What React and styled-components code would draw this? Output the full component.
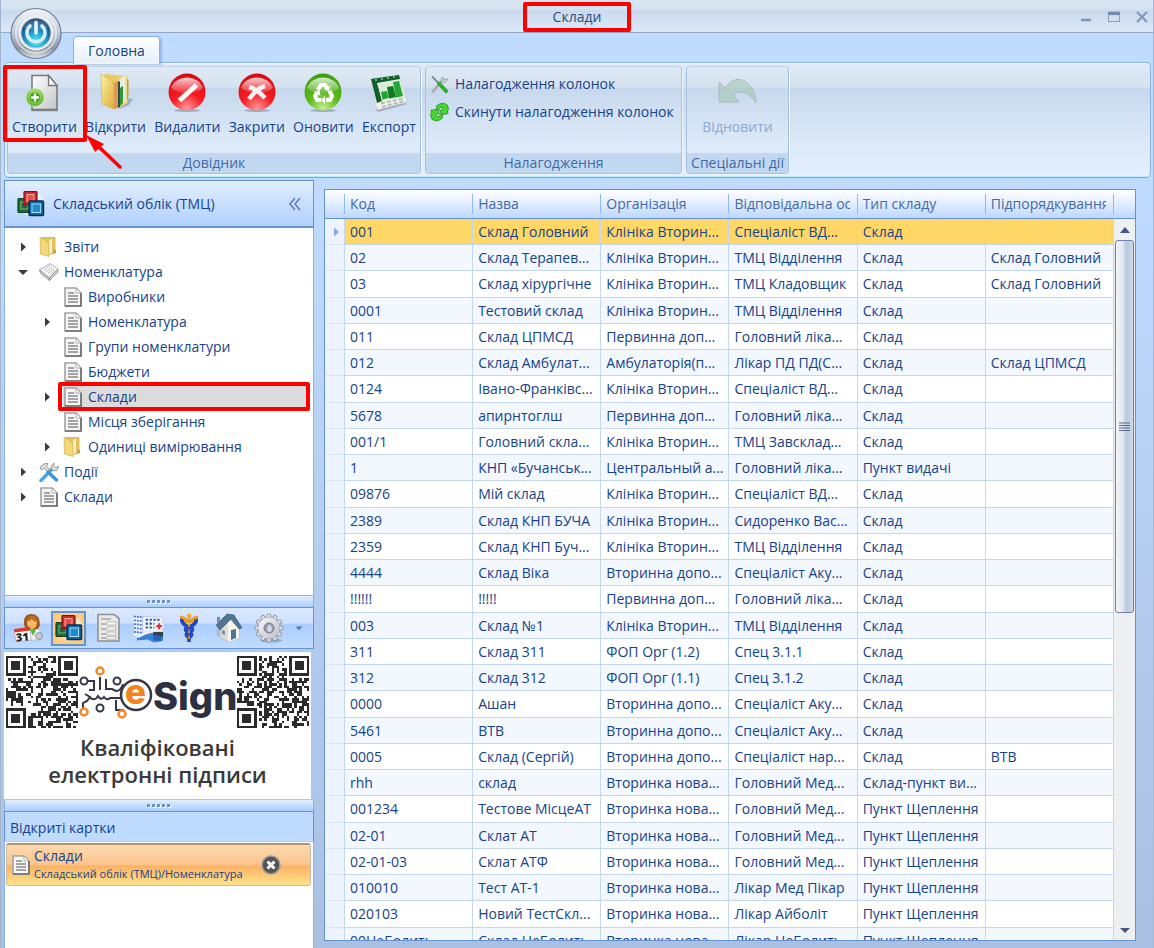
import React, { useState } from 'react';
import styled, { createGlobalStyle, css } from 'styled-components';

const GlobalStyle = createGlobalStyle`
  * {
    box-sizing: border-box;
  }

  body {
    margin: 0;
    font-family: "Open Sans", "Noto Sans", sans-serif;
    font-size: 14px;
    line-height: 20px;
    color: #15428b;
  }

  button {
    margin: 0;
    padding: 0;
    border: none;
    background: none;
    font: inherit;
    color: inherit;
    cursor: pointer;
  }

  svg {
    display: block;
    flex-shrink: 0;
  }
`;

// ---------- window ----------

const Window = styled.div`
  position: relative;
  display: flex;
  flex-direction: column;
  height: 100vh;
  overflow: hidden;
  border-left: 1px solid #a3b4cc;
  border-right: 1px solid #a3b8d6;
  background: linear-gradient(#bfdbff 0, #bfdbff 180px, #a9c0e2 100%);
`;

const TitleBar = styled.header`
  display: flex;
  align-items: center;
  height: 33px;
  padding-top: 1px;
  border-bottom: 1px solid #94a6c4;
  background: linear-gradient(#dae7f3 0, #d5e2ef 9px, #c9d9ed 11px, #dde9f8 32px);
`;

const TitleText = styled.h1`
  position: relative;
  margin: 0 auto;
  padding: 0 30px;
  font-size: 14px;
  font-weight: 400;
  color: #2f4b7c;
`;

const WindowControls = styled.div`
  display: flex;
  gap: 16px;
  margin-right: 5px;
`;

const TitleSide = styled.div`
  flex: 1;
  display: flex;
  justify-content: flex-end;
`;

const Orb = styled.button`
  position: absolute;
  top: 7px;
  left: 9px;
  z-index: 3;
`;

// red marker drawn around a highlighted control
const Frame = styled.span`
  position: absolute;
  inset: ${props => props.$inset};
  z-index: 2;
  border: 4px solid #ff0000;
  border-radius: 2px;
  pointer-events: none;
`;

const PointerArrow = styled.svg`
  position: absolute;
  top: 66px;
  left: 76px;
  z-index: 2;
`;

// ---------- ribbon ----------

const TabStrip = styled.nav`
  display: flex;
  align-items: flex-end;
  height: 30px;
  padding-left: 72px;
`;

const Tab = styled.button`
  position: relative;
  z-index: 1;
  height: 28px;
  margin-bottom: -1px;
  padding: 0 14px;
  border: 1px solid #8db2e3;
  border-bottom: none;
  border-radius: 4px 4px 0 0;
  background: linear-gradient(#ffffff, #e6eff9);
  box-shadow: inset 0 0 0 1px #f2f8ff, 2px 1px 2px rgba(90, 130, 190, 0.4);
`;

const Ribbon = styled.div`
  display: flex;
  gap: 4px;
  height: 116px;
  margin: -1px 2px 0 3px;
  padding: 3px 2px;
  border: 1px solid #8db2e3;
  border-bottom-color: #7ea6d6;
  border-radius: 5px;
  background: linear-gradient(#e0ebf6 0, #d5e2ef 24px, #c7d8ed 25px, #d5e4f4 60px, #e5f0fd 112px);
  box-shadow: inset 0 -1px 0 #b5ecf8, inset 0 1px 0 #f2f8fe;
`;

const Group = styled.section`
  display: flex;
  flex-direction: column;
  width: ${props => props.$width};
  border: 1px solid #a6c2e0;
  border-top-color: #c3d3e4;
  border-radius: 4px;
  overflow: ${props => (props.$marked ? 'visible' : 'hidden')};
  box-shadow: 1px 1px 0 #eef6fe;
`;

const GroupBody = styled.div`
  flex: 1;
  display: flex;
  justify-content: ${props => props.$align || 'space-between'};
  align-items: flex-start;
`;

const GroupList = styled.div`
  flex: 1;
  display: flex;
  flex-direction: column;
  align-items: flex-start;
  gap: 4px;
  padding: 5px 4px;
`;

const GroupTitle = styled.h2`
  margin: 0;
  height: 20px;
  border-radius: 0 0 3px 3px;
  background: #c1d8f0;
  font-size: 14px;
  font-weight: 400;
  text-align: center;
  white-space: nowrap;
  color: #3e6aaa;
`;

const RibbonButton = styled.button`
  position: relative;
  display: flex;
  flex-direction: column;
  align-items: center;
  gap: 4px;
  padding: 6px 4px 3px;

  &:disabled {
    color: #8fa9cf;
    cursor: default;
  }

  &:disabled svg {
    opacity: 0.55;
  }
`;

const SmallButton = styled.button`
  display: flex;
  align-items: center;
  gap: 6px;
  height: 24px;
  white-space: nowrap;
`;

// ---------- layout ----------

const Workspace = styled.div`
  flex: 1;
  display: flex;
  gap: 10px;
  min-height: 0;
  padding: 2px 17px 0 3px;
`;

const Sidebar = styled.aside`
  display: flex;
  flex-direction: column;
  width: 310px;
  flex-shrink: 0;
`;

const NavHeader = styled.div`
  display: flex;
  align-items: center;
  gap: 8px;
  height: 48px;
  padding: 0 10px 0 12px;
  border: 1px solid #6593cf;
  border-bottom-width: 2px;
  background: linear-gradient(#e3efff, #c9dfff 50%, #b0d1ff);
`;

const NavTitle = styled.h2`
  flex: 1;
  margin: 0;
  font-size: 14px;
  font-weight: 400;
`;

const Tree = styled.ul`
  flex: 1;
  margin: 0;
  padding: 6px 5px 0 10px;
  list-style: none;
  border: 1px solid #8db2e3;
  border-top: none;
  background: #ffffff;
`;

const TreeRow = styled.li`
  display: flex;
  align-items: center;
  gap: 8px;
  height: 25px;
  padding-left: ${props => props.$level * 24}px;
`;

const Expander = styled.span`
  display: flex;
  justify-content: center;
  width: 16px;
`;

const TreeItem = styled.button`
  position: relative;
  flex: 1;
  display: flex;
  align-items: center;
  gap: 5px;
  height: 25px;
  background: ${props => (props.$selected ? '#dcdcdc' : 'none')};
`;

const Splitter = styled.div`
  display: flex;
  justify-content: center;
  align-items: center;
  height: 11px;
  border-left: 1px solid #8db2e3;
  border-right: 1px solid #8db2e3;
  background: linear-gradient(#e3efff, #a9ccfa);
`;

const IconBar = styled.div`
  display: flex;
  align-items: center;
  gap: 5px;
  height: 42px;
  padding-left: 6px;
  border: 1px solid #6593cf;
  background: linear-gradient(#dbe9ff 0, #cfe1ff 38%, #abcdff 40%, #c3dcff 100%);
`;

const IconButton = styled.button`
  display: flex;
  align-items: center;
  justify-content: center;
  width: 35px;
  height: 35px;
  border: 2px solid transparent;

  ${props => props.$active && css`
    border-color: #6593cf;
    background: radial-gradient(#ffe3b8 0, #ffcf8b 45%, #ffc872 100%);
  `}
`;

const MoreButton = styled.button`
  padding: 4px;
`;

const Banner = styled.section`
  height: 147px;
  margin: 3px 3px 1px 0;
  padding-top: 4px;
  background: #ffffff;
`;

const BannerTop = styled.div`
  display: flex;
  justify-content: space-between;
  padding: 0 2px;
`;

const BannerText = styled.p`
  margin: 6px 0 0;
  font-size: 22px;
  font-weight: 600;
  line-height: 27px;
  text-align: center;
  color: #3a3a3a;
`;

const CardsHeader = styled.h2`
  margin: 0;
  padding: 6px 5px 2px;
  height: 31px;
  border: 1px solid #6593cf;
  border-bottom-color: #c0c8d2;
  background: #bfdbff;
  font-size: 14px;
  font-weight: 400;
`;

const Cards = styled.div`
  height: 106px;
  padding: 1px 2px 0 1px;
  border-left: 1px solid #8db2e3;
  border-right: 1px solid #8db2e3;
  background: #ffffff;
`;

const Card = styled.div`
  display: flex;
  align-items: center;
  height: 43px;
  padding: 0 29px 0 4px;
  border: 1px solid #c9bca4;
  border-top: 2px solid #b0936f;
  border-radius: 3px;
  background: linear-gradient(#fcd9b0 0, #fbc58b 50%, #fbb163 52%, #ffe38b 100%);
`;

const CardText = styled.div`
  flex: 1;
  margin-left: 3px;
`;

const CardName = styled.div`
  line-height: 18px;
`;

const CardPath = styled.div`
  font-size: 11px;
  line-height: 18px;
`;

// ---------- grid ----------

const GridPanel = styled.main`
  flex: 1;
  display: flex;
  min-width: 0;
  margin: 9px 0 7px;
  border: 1px solid #6593cf;
  background: #ffffff;
  overflow: hidden;
`;

const TableBox = styled.div`
  flex: 1;
  min-width: 0;
  overflow: hidden;
`;

const Table = styled.table`
  width: 100%;
  table-layout: fixed;
  border-collapse: separate;
  border-spacing: 0;
`;

const headFill = css`
  height: 29px;
  border-bottom: 1px solid #6593cf;
  background: linear-gradient(#ffffff, #e1edff 50%, #bcd7ff);
`;

const HeadCell = styled.th`
  ${headFill}
  width: ${props => (props.$marker ? '19px' : 'auto')};
  padding: 0;
  font-weight: 400;
  text-align: left;
`;

const HeadLabel = styled.span`
  display: block;
  margin-right: 7px;
  padding-left: 5px;
  border-left: 1px solid #8fbbf0;
  overflow: hidden;
  white-space: nowrap;
  color: #4469a5;
`;

const Row = styled.tr`
  height: 26px;
  background: ${props => (props.$selected ? '#ffd766' : '#ffffff')};

  /* rows are a little over 26px high, so every fourth one takes the spare pixel */
  &:nth-child(4n + 3) {
    height: 27px;
  }

  &:nth-child(even) {
    background: #f3f8ff;
  }
`;

const Cell = styled.td`
  padding: 0 0 0 5px;
  border-left: 1px solid #c4d7f0;
  border-bottom: 1px solid #c4d7f0;
  overflow: hidden;
  white-space: nowrap;
`;

const MarkerCell = styled.td`
  padding: 0 0 0 5px;
  border-bottom: 1px solid #d9e5f5;
  background: #edf4ff;
`;

const ScrollBar = styled.div`
  display: flex;
  flex-direction: column;
  width: 22px;
  background: #eeeff1;
`;

const ScrollHead = styled.div`
  ${headFill}
  flex-shrink: 0;
  padding-top: 4px;

  &::before {
    content: '';
    display: block;
    height: 20px;
    border-left: 1px solid #8fbbf0;
  }
`;

const ScrollTrack = styled.div`
  flex: 1;
  padding: 0 1px;
  border-left: 1px solid #c4d7f0;
`;

const ScrollButton = styled.button`
  display: flex;
  align-items: center;
  justify-content: center;
  height: 21px;
  border-left: 1px solid #c4d7f0;
`;

const ScrollThumb = styled.div`
  display: flex;
  align-items: center;
  justify-content: center;
  height: 55%;
  border: 1px solid #6f7fa8;
  border-radius: 3px;
  background: linear-gradient(90deg, #f2f4f8 0, #e3e8ef 40%, #b9c8dc 60%, #cfd9e6 100%);
`;

// ---------- icons ----------

const OrbIcon = () => (
  <svg width="53" height="53" viewBox="0 0 53 53">
    <defs>
      <linearGradient id="orbRim" x1="0" y1="0" x2="0" y2="1">
        <stop offset="0" stopColor="#f4f6f9" />
        <stop offset="0.45" stopColor="#c6cedb" />
        <stop offset="0.8" stopColor="#8d94a0" />
        <stop offset="1" stopColor="#e4e6ea" />
      </linearGradient>
      <radialGradient id="orbCore" cx="0.5" cy="0.8" r="0.75">
        <stop offset="0" stopColor="#4ff3fb" />
        <stop offset="0.5" stopColor="#1c93c6" />
        <stop offset="1" stopColor="#123f70" />
      </radialGradient>
    </defs>
    <circle cx="26" cy="26.500" r="25" fill="url(#orbRim)" stroke="#6f7d95" strokeWidth="1.200" />
    <circle cx="26" cy="26" r="20" fill="none" stroke="#e9edf3" strokeOpacity="0.7" strokeWidth="2" />
    <circle cx="26" cy="26" r="16.500" fill="#c9ced8" stroke="#eef1f5" strokeWidth="2" />
    <circle cx="26" cy="26" r="14.500" fill="url(#orbCore)" />
    <path d="M20 19a9 9 0 1 0 12 0" fill="none" stroke="#d5ecf7" strokeWidth="3.600" strokeLinecap="round" />
    <path d="M26 15.500v10.500" stroke="#e6f5fb" strokeWidth="3.600" strokeLinecap="round" />
    <path d="M13 20a14.500 14.500 0 0 1 26 0q-13 5-26 0z" fill="#ffffff" fillOpacity="0.15" />
  </svg>
);

const CreateIcon = () => (
  <svg width="40" height="40" viewBox="2 0 40 40">
    <defs>
      <linearGradient id="pageFill" x1="0" y1="0" x2="1" y2="1">
        <stop offset="0" stopColor="#ffffff" />
        <stop offset="1" stopColor="#c4c4c4" />
      </linearGradient>
      <radialGradient id="plusFill" cx="0.5" cy="0.3" r="0.7">
        <stop offset="0" stopColor="#b7ec7e" />
        <stop offset="1" stopColor="#58b01f" />
      </radialGradient>
    </defs>
    <path d="M9.500 37.500h26.500" stroke="#555555" strokeWidth="1.500" strokeOpacity="0.6" />
    <path d="M10 2.500h16.500l8.500 10V36.500H10z" fill="url(#pageFill)" stroke="#777777" strokeWidth="1.500" />
    <path d="M26.500 2.500v10H35z" fill="#f5f5f5" stroke="#777777" strokeWidth="1.300" />
    <circle cx="13" cy="24.500" r="9" fill="url(#plusFill)" stroke="#c5eaa8" strokeWidth="0.800" />
    <circle cx="13" cy="24.500" r="5.500" fill="#3f9e1c" stroke="#8fd460" strokeWidth="1" />
    <path d="M13 20.500v8M9 24.500h8" stroke="#ffffff" strokeWidth="2.400" />
  </svg>
);

const OpenIcon = () => (
  <svg width="40" height="40" viewBox="-3 -1 40 40">
    <defs>
      <linearGradient id="folderFill" x1="0" y1="0" x2="1" y2="1">
        <stop offset="0" stopColor="#fdf2a5" />
        <stop offset="1" stopColor="#dfae38" />
      </linearGradient>
    </defs>
    <path d="M20 35l10-4 4-6-6-1z" fill="#7f93ad" fillOpacity="0.6" />
    <path d="M5 0l23 2v27l-8 5z" fill="#eacb62" />
    <path d="M23 2l6-1v27l-5 3z" fill="#f3df86" />
    <path d="M20 5l6-3v24l-4 5z" fill="#e5efe2" />
    <path d="M15 9l4-2v27l-4 1z" fill="#e0965a" />
    <path d="M19 8l2-1v26l-2 1z" fill="#3b4a44" />
    <path d="M21 14l3-2v17l-3 3z" fill="#2c9a38" />
    <path d="M2 0l10 6 3 4v25l-12-5z" fill="url(#folderFill)" stroke="#d4a93a" strokeWidth="0.600" />
    <path d="M28 5h1.500v16l-1.500 8z" fill="#c79b30" />
  </svg>
);

const Ball = ({ id, light, main, dark, children }) => (
  <svg width="40" height="40" viewBox="0 0 40 40">
    <defs>
      <radialGradient id={id} cx="0.5" cy="0.95" r="0.95">
        <stop offset="0" stopColor={light} />
        <stop offset="0.45" stopColor={main} />
        <stop offset="1" stopColor={dark} />
      </radialGradient>
      <linearGradient id={id + 'Shine'} x1="0" y1="0" x2="0" y2="1">
        <stop offset="0" stopColor="#ffffff" stopOpacity="0.8" />
        <stop offset="1" stopColor="#ffffff" stopOpacity="0.1" />
      </linearGradient>
    </defs>
    <ellipse cx="20" cy="37.500" rx="13" ry="1.500" fill="#5a6a80" fillOpacity="0.45" />
    <circle cx="20" cy="19" r="18.500" fill={`url(#${id})`} />
    <path d="M4 15a16.500 14 0 0 1 32 0q-4 4-14 5t-18-5z" fill={`url(#${id}Shine)`} />
    {children}
  </svg>
);

const DeleteIcon = () => (
  <Ball id="ballDel" light="#ff9a9a" main="#f51c24" dark="#d80812">
    <path d="M12.500 27.500L29.500 12" stroke="#ffffff" strokeWidth="5" />
  </Ball>
);

const CloseBallIcon = () => (
  <Ball id="ballClose" light="#ff9a9a" main="#f51c24" dark="#d80812">
    <path d="M12 14q8 2 16 11M28 13q-8 2-16 13" stroke="#f7f3f3" strokeWidth="4.500" fill="none" />
  </Ball>
);

const RefreshIcon = () => (
  <Ball id="ballRef" light="#c5ef8f" main="#5dbb1c" dark="#3f9e0c">
    <g fill="none" stroke="#ffffff" strokeWidth="4">
      <path d="M14.500 17l3.500-5h4l2 3.500" />
      <path d="M26.500 18l2.500 5-2 4h-4" />
      <path d="M18 27h-4l-2-4 2-3" />
    </g>
    <path d="M27.500 12.500l-1.500 6-5-2.500zM22 23v8l-4-4zM10.500 19l6-1.500 1 5.500z" fill="#ffffff" />
  </Ball>
);

const ExportIcon = () => (
  <svg width="40" height="40" viewBox="0 0 40 40">
    <path d="M6 36l30-6 2 1-29 8z" fill="#6b7a90" fillOpacity="0.5" />
    <path d="M2 6l28-4 8 27-30 8z" fill="#eef1ee" stroke="#c6ccc6" strokeWidth="0.600" />
    <path d="M2 6l28-4 1 4L8 10l5 18-5 2z" fill="#11612c" />
    <path d="M6 7l2 0M12 6l2 0M18 5l2 0M24 4l2 0" stroke="#7fc08f" strokeWidth="1.500" />
    <path d="M9 11l22-4 4 17-22 4z" fill="#d6ecd8" />
    <path d="M12 19l6-1 1.500 7-6 1.500z" fill="#1fa52e" />
    <path d="M18 14l6-1 3 11-7 1.500z" fill="#0e7a1b" />
    <path d="M24 9l6-1 4 15-7 1.500z" fill="#27a536" />
    <path d="M12 30.500l22-5M13 34l22-6" stroke="#b4bab4" strokeWidth="1.800" strokeDasharray="4 2" />
  </svg>
);

const UndoIcon = () => (
  <svg width="40" height="40" viewBox="0 0 40 40">
    <path d="M1 9v20h20l-6-7c7-6 16-3 23 8C38 12 20-4 7 15z" fill="#a3c6ae" stroke="#7ea88c" strokeWidth="1" />
  </svg>
);

const ToolsSmallIcon = () => (
  <svg width="19" height="20" viewBox="0 0 20 20">
    <path d="M3 18L14 5" stroke="#a9adb3" strokeWidth="3" strokeLinecap="round" />
    <path d="M13 2.500l1.500 3.500 4-1.500a4 4 0 0 1-5.500 3.500a4 4 0 0 1 0-5.500z" fill="#d9dcdf" stroke="#8f949b" strokeWidth="0.800" />
    <path d="M2 2l8 8" stroke="#7f858c" strokeWidth="2" />
    <path d="M9.500 9.500l7.500 8" stroke="#2fae2b" strokeWidth="4" strokeLinecap="round" />
  </svg>
);

const ResetIcon = () => (
  <svg width="19" height="20" viewBox="0 0 20 20">
    <g stroke="#1f8a1c" strokeWidth="0.800" fill="#46d531">
      <path d="M7 8V3.500q6-5 11-1 3 4 0 8l1.500 1-7 1.500-2.500-5 2 0.500q2-2 0-3.500-2-1-3 3z" />
      <path d="M13 12v4.500q-6 5-11 1-3-4 0-8l-1.500-1 7-1.500 2.500 5-2-0.500q-2 2 0 3.500 2 1 3-3z" />
    </g>
  </svg>
);

const SquaresIcon = ({ size = 28 }) => (
  <svg width={size} height={size} viewBox="0 0 28 28">
    <circle cx="15" cy="14" r="12.500" fill="#fffaf0" fillOpacity="0.6" />
    <rect x="1" y="8.500" width="13" height="14" rx="1" fill="#1d6b35" stroke="#123f22" strokeWidth="1.200" />
    <rect x="4" y="12" width="7" height="7" fill="#2a5f3a" stroke="#7db98d" strokeWidth="1" />
    <rect x="7" y="1.500" width="13" height="13" rx="1" fill="#d32626" stroke="#7d1414" strokeWidth="1.200" />
    <rect x="10" y="4.500" width="7" height="7" fill="#ee4d43" stroke="#ffb0a8" strokeWidth="1" />
    <rect x="12" y="11" width="14.500" height="14.500" rx="1" fill="#0f6fb0" stroke="#0b2c49" strokeWidth="1.500" />
    <rect x="15" y="14" width="8.500" height="8.500" fill="#1d8ccf" stroke="#a5dcf7" strokeWidth="1" />
  </svg>
);

const DocIcon = () => (
  <svg width="20" height="20" viewBox="0 0 20 20">
    <path d="M2 1h11l5 5v13H2z" fill="#f6f6f6" stroke="#a2a2a2" strokeWidth="1.600" />
    <path d="M18 6v13H2" fill="none" stroke="#6e6e6e" strokeWidth="1.600" />
    <path d="M13 1v5h5z" fill="#fdfdfd" stroke="#9a9a9a" strokeWidth="0.800" />
    <path d="M5 6h6M5 9h10M5 12h10M5 15h10" stroke="#a4a4a4" strokeWidth="1.800" />
  </svg>
);

const FolderIcon = () => (
  <svg width="20" height="20" viewBox="0 0 20 20">
    <path d="M3 0.500h13v15l-5 2z" fill="#e7c35c" stroke="#c79a35" strokeWidth="0.600" />
    <path d="M10 3l3-1v14l-3 1z" fill="#f9f2d2" />
    <path d="M1 0.500l5 2 4 4v13L1.500 17z" fill="#f4d878" stroke="#cda13c" strokeWidth="0.600" />
    <path d="M15 12l2 1v3l-3 1z" fill="#c9a040" />
  </svg>
);

const BooksIcon = () => (
  <svg width="20" height="20" viewBox="0 0 20 20">
    <path d="M0.500 8L11 1.500l8 5.500-8.500 9z" fill="#f4f4f4" stroke="#9a9a9a" strokeWidth="0.800" />
    <path d="M0.500 8l10 8 0 2.500-9-7zM10.500 16L19 7v3l-8.500 8.500z" fill="#cfcfcf" stroke="#858585" strokeWidth="0.700" />
    <path d="M5 8l6-4M7 9.500l6-4M9 11l6-4M11 12.500l5-4" stroke="#b3b3b3" strokeWidth="1" strokeDasharray="2 1" />
  </svg>
);

const HammerIcon = () => (
  <svg width="20" height="20" viewBox="0 0 20 20">
    <path d="M2 18.500L13 7" stroke="#4ba6e0" strokeWidth="3.400" strokeLinecap="round" />
    <path d="M9 10l8.500 8" stroke="#3a97d8" strokeWidth="3.400" strokeLinecap="round" />
    <path d="M1 6q2-5 8-4.500L7.500 4l3 3-2 2.500-3-3.500L2.500 8z" fill="#dedede" stroke="#878787" strokeWidth="0.800" />
    <path d="M12.500 7q-1-4 3-6l-1 3 2 1.500 3-1q0 4-4.500 4.500z" fill="#dedede" stroke="#878787" strokeWidth="0.800" />
  </svg>
);

const DoctorIcon = () => (
  <svg width="30" height="30" viewBox="0 0 30 30">
    <path d="M12 14q9-4 15 6v7H13z" fill="#f3f6f4" stroke="#a9b6b0" strokeWidth="0.600" />
    <path d="M15 15l4 8 4-8z" fill="#57b648" />
    <path d="M10 12q-1-11 7.500-11T26 12l-2 4H12z" fill="#9c5a20" />
    <ellipse cx="18" cy="9.500" rx="5" ry="6.500" fill="#fbb95d" />
    <path d="M12.500 8q2-5 6-5t6 6q-5 0-7-3-2 3-5 2z" fill="#b86d28" />
    <path d="M0 17l16-2 1 12-15 2z" fill="#ffffff" stroke="#9aa3ae" strokeWidth="0.700" />
    <path d="M0 16l16-2 0 3.500-15.500 2z" fill="#e1342b" />
    <text x="2" y="28" fontFamily="Open Sans, sans-serif" fontSize="11" fontWeight="800" fill="#222222" transform="rotate(-5 8 24)">31</text>
    <circle cx="25" cy="23" r="3.500" fill="#c4cbd4" stroke="#8d98a6" />
  </svg>
);

const FormIcon = () => (
  <svg width="30" height="30" viewBox="1 0 30 30">
    <path d="M5 1.500h16l5 4V28H5z" fill="#e9e9e6" stroke="#8f8f8f" strokeWidth="1.600" />
    <path d="M8 6h10M8 11h5M8 16h5M8 21h5M8 25h5" stroke="#a5a5a5" strokeWidth="1.600" />
    <path d="M14 9h9v3h-9zM14 14h9v3h-9zM14 19h9v3h-9zM14 23.500h9v2.500h-9z" fill="#fbfbfb" stroke="#a5a5a5" strokeWidth="0.700" />
  </svg>
);

const HospitalIcon = () => (
  <svg width="30" height="30" viewBox="0 0 31 30">
    <path d="M0 1l10 2v23L0 23z" fill="#e6effa" />
    <path d="M0 3l10 1M0 7l10 1M0 11l10 1M0 15l10 1M0 19l10 1" stroke="#3d72be" strokeWidth="1.700" strokeDasharray="2 1" />
    <path d="M9 3l21 1v20H9z" fill="#f3f7fc" stroke="#9fb7d8" strokeWidth="0.600" />
    <path d="M12 6.500h16M12 10.500h9M12 14.500h9" stroke="#2f62b0" strokeWidth="2.200" strokeDasharray="2.500 1.500" />
    <circle cx="26" cy="13" r="4.500" fill="#ffffff" stroke="#d8dfe8" />
    <path d="M26 10v6M23 13h6" stroke="#e0313c" strokeWidth="2.200" />
    <path d="M3 24l16-4 11 1v7l-9 2-7-3-11 1z" fill="#3c7fd6" />
    <path d="M20 19h10v5H20z" fill="#3a3f48" />
    <path d="M20 22l8 1v6l-8-2z" fill="#2361bd" />
    <path d="M1 24l12-6 4 1-12 6z" fill="#f7f9fc" stroke="#b9cbe2" strokeWidth="0.500" />
  </svg>
);

const CaduceusIcon = () => (
  <svg width="30" height="30" viewBox="0 0 30 30">
    <path d="M15 2v26" stroke="#f1a11c" strokeWidth="2.200" />
    <circle cx="15" cy="3" r="2.500" fill="#f7b030" />
    <path d="M14 7Q9 2 6 3.500L7 7l4 3 3-1zM16 7q5-5 8-3.500L23 7l-4 3-3-1z" fill="#f1a11c" stroke="#c97c10" strokeWidth="0.500" />
    <path d="M8 6q-1 3 3 6t7 3M22 6q1 3-3 6t-7 3M12 15q-2 3 3 4.500t1 4.500M18 15q2 3-3 4.500t-1 4.500M15 24v5" fill="none" stroke="#1f46c4" strokeWidth="3.600" />
    <path d="M15 11v3M15 18v2M14 25h2" stroke="#f1a11c" strokeWidth="1.600" />
  </svg>
);

const HouseIcon = () => (
  <svg width="30" height="30" viewBox="0 0 30 30">
    <path d="M1 17q6-3 8 0v8l-7-3z" fill="#a9b6c2" fillOpacity="0.7" />
    <path d="M6 14l8-8 11 9v10l-11 4-8-5z" fill="#dedcd6" stroke="#a9a9a2" strokeWidth="0.600" />
    <path d="M14 6l11 9v10l-11 4z" fill="#f8f7f2" />
    <path d="M2 12L13 1l7 1 8 13-3 1-8-10L6 17z" fill="#4f7690" stroke="#36566d" strokeWidth="0.600" />
    <path d="M17 17l5-1v9l-5 2z" fill="#4d7794" />
    <path d="M8 17l3 1v4l-3-1z" fill="#6d93ad" />
    <path d="M3 4h3v5l-3 2z" fill="#7b8d9b" />
  </svg>
);

const GearIcon = () => (
  <svg width="30" height="30" viewBox="0 0 30 30">
    <defs>
      <linearGradient id="gearFill" x1="0" y1="0" x2="1" y2="1">
        <stop offset="0" stopColor="#fbfbfd" />
        <stop offset="1" stopColor="#b9bbc6" />
      </linearGradient>
    </defs>
    <ellipse cx="17" cy="27.500" rx="11" ry="2" fill="#51688e" fillOpacity="0.4" />
    {[0, 30, 60, 90, 120, 150, 180, 210, 240, 270, 300, 330].map(angle => (
      <path
        key={angle}
        d="M12.500 5l1-4h3l1 4z"
        fill="#e3e4ea"
        stroke="#8e909d"
        strokeWidth="0.900"
        transform={`rotate(${angle} 15 15)`}
      />
    ))}
    <circle cx="15" cy="15" r="11" fill="url(#gearFill)" stroke="#a4a6b2" strokeWidth="0.700" />
    <circle cx="15" cy="15" r="5" fill="#9c9eaa" stroke="#797b8c" strokeWidth="1" />
    <ellipse cx="15.500" cy="15.500" rx="2.200" ry="3.500" fill="#c9dcf8" />
  </svg>
);

const RoundCloseIcon = () => (
  <svg width="20" height="20" viewBox="0 0 20 20">
    <circle cx="10" cy="10" r="9" fill="#555555" stroke="#9d9d9d" strokeWidth="1.500" />
    <path d="M6.500 6.500l7 7M13.500 6.500l-7 7" stroke="#ffffff" strokeWidth="3" />
  </svg>
);

const Triangle = ({ dir, color = '#3a3a3a' }) => {
  const paths = {
    right: 'M4 1.500l5 4.500-5 4.500z',
    down: 'M1 4h10l-5 5z',
    up: 'M1 9h10L6 3z'
  };
  return (
    <svg width="12" height="12" viewBox="0 0 12 12">
      <path d={paths[dir]} fill={color} />
    </svg>
  );
};

const Dots = () => (
  <svg width="24" height="4" viewBox="0 0 24 4">
    {[0, 5, 10, 15, 20].map(x => (
      <g key={x}>
        <rect x={x + 1} y="1" width="3" height="3" fill="#ffffff" />
        <rect x={x} y="0" width="3" height="3" fill="#6b93cb" />
      </g>
    ))}
  </svg>
);

// QR-like block: three finder squares and scattered modules
const QrCode = ({ seed }) => {
  const size = 29;
  const modules = [];
  let state = seed;
  for (let y = 0; y < size; y++) {
    for (let x = 0; x < size; x++) {
      state = (state * 1103515245 + 12345) % 2147483648;
      const inFinder = (x < 9 && y < 9) || (x > size - 10 && y < 9) || (x < 9 && y > size - 10);
      if (!inFinder && state / 2147483648 > 0.48) {
        modules.push(`M${x} ${y}h1v1h-1z`);
      }
    }
  }
  const finders = [[0, 0], [size - 8, 0], [0, size - 8]];
  return (
    <svg width="72" height="72" viewBox="0 0 29 29" shapeRendering="crispEdges">
      <path d={modules.join('')} fill="#2b2b2b" />
      {finders.map(([x, y]) => (
        <g key={x + '-' + y}>
          <rect x={x + 0.5} y={y + 0.5} width="7" height="7" fill="#ffffff" stroke="#2b2b2b" />
          <rect x={x + 2.5} y={y + 2.5} width="3" height="3" fill="#2b2b2b" stroke="#2b2b2b" strokeWidth="0.6" />
        </g>
      ))}
    </svg>
  );
};

const SignLogo = () => (
  <svg width="158" height="72" viewBox="80 657 158 72">
    <g fill="none" stroke="#343746" strokeWidth="2">
      <circle cx="85" cy="682" r="3.500" />
      <path d="M89 682h6v9h-5M101 678v13M107 680v10h6l4 2q5 0 7-7" />
      <circle cx="118" cy="682" r="3.500" />
      <path d="M86 695l5 3-3 4-4 2v5M90 698q6 5 9-1 3 5 6 1 3 4 6 1h12M117 712v-11M117 711h8" />
      <circle cx="101" cy="709" r="3.500" />
      <circle cx="137" cy="696" r="15" fill="#ffffff" strokeWidth="2.500" />
    </g>
    <g fill="none" stroke="#f58a2c" strokeWidth="2.500">
      <circle cx="101" cy="672" r="3.500" />
      <circle cx="85" cy="713" r="3.500" />
      <circle cx="123" cy="715" r="3.500" />
    </g>
    <text x="126" y="705" fontFamily="Inter, sans-serif" fontSize="35" fontWeight="800" fill="#f58220">e</text>
    <text x="154" y="711" fontFamily="Inter, sans-serif" fontSize="38" fontWeight="800" fill="#2d3040">Sign</text>
  </svg>
);

// ---------- data ----------

const ribbonButtons = [
  { label: 'Створити', Icon: CreateIcon, marked: true },
  { label: 'Відкрити', Icon: OpenIcon },
  { label: 'Видалити', Icon: DeleteIcon },
  { label: 'Закрити', Icon: CloseBallIcon },
  { label: 'Оновити', Icon: RefreshIcon },
  { label: 'Експорт', Icon: ExportIcon }
];

const treeItems = [
  { id: 'reports', label: 'Звіти', level: 0, arrow: 'right', Icon: FolderIcon },
  { id: 'nomen', label: 'Номенклатура', level: 0, arrow: 'down', Icon: BooksIcon },
  { id: 'makers', label: 'Виробники', level: 1, Icon: DocIcon },
  { id: 'nomen2', label: 'Номенклатура', level: 1, arrow: 'right', Icon: DocIcon },
  { id: 'groups', label: 'Групи номенклатури', level: 1, Icon: DocIcon },
  { id: 'budgets', label: 'Бюджети', level: 1, Icon: DocIcon },
  { id: 'stores', label: 'Склади', level: 1, arrow: 'right', Icon: DocIcon, marked: true },
  { id: 'places', label: 'Місця зберігання', level: 1, Icon: DocIcon },
  { id: 'units', label: 'Одиниці вимірювання', level: 1, arrow: 'right', Icon: FolderIcon },
  { id: 'events', label: 'Події', level: 0, arrow: 'right', Icon: HammerIcon },
  { id: 'stores2', label: 'Склади', level: 0, arrow: 'right', Icon: DocIcon }
];

const modules = [
  { name: 'Реєстратура', Icon: DoctorIcon },
  { name: 'Складський облік', Icon: SquaresIcon, active: true },
  { name: 'Документи', Icon: FormIcon },
  { name: 'Стаціонар', Icon: HospitalIcon },
  { name: 'Медицина', Icon: CaduceusIcon },
  { name: 'Заклад', Icon: HouseIcon },
  { name: 'Налаштування', Icon: GearIcon }
];

const columns = ['Код', 'Назва', 'Організація', 'Відповідальна ос', 'Тип складу', 'Підпорядкування'];

const rows = [
  ['001', 'Склад Головний', 'Клініка Вторин...', 'Спеціаліст ВД...', 'Склад', ''],
  ['02', 'Склад Терапев...', 'Клініка Вторин...', 'ТМЦ Відділення', 'Склад', 'Склад Головний'],
  ['03', 'Склад хірургічне', 'Клініка Вторин...', 'ТМЦ Кладовщик', 'Склад', 'Склад Головний'],
  ['0001', 'Тестовий склад', 'Клініка Вторин...', 'ТМЦ Відділення', 'Склад', ''],
  ['011', 'Склад ЦПМСД', 'Первинна доп...', 'Головний ліка...', 'Склад', ''],
  ['012', 'Склад Амбулат...', 'Амбулаторія(п...', 'Лікар ПД ПД(С...', 'Склад', 'Склад ЦПМСД'],
  ['0124', 'Івано-Франківс...', 'Клініка Вторин...', 'Спеціаліст ВД...', 'Склад', ''],
  ['5678', 'апирнтоглш', 'Первинна доп...', 'Головний ліка...', 'Склад', ''],
  ['001/1', 'Головний скла...', 'Клініка Вторин...', 'ТМЦ Завсклад...', 'Склад', ''],
  ['1', 'КНП «Бучанськ...', 'Центральный а...', 'Головний ліка...', 'Пункт видачі', ''],
  ['09876', 'Мій склад', 'Клініка Вторин...', 'Спеціаліст ВД...', 'Склад', ''],
  ['2389', 'Склад КНП БУЧА', 'Клініка Вторин...', 'Сидоренко Вас...', 'Склад', ''],
  ['2359', 'Склад КНП Буч...', 'Клініка Вторин...', 'ТМЦ Відділення', 'Склад', ''],
  ['4444', 'Склад Віка', 'Вторинна допо...', 'Спеціаліст Аку...', 'Склад', ''],
  ['!!!!!!', '!!!!!', 'Первинна доп...', 'Головний ліка...', 'Склад', ''],
  ['003', 'Склад №1', 'Клініка Вторин...', 'ТМЦ Відділення', 'Склад', ''],
  ['311', 'Склад 311', 'ФОП Орг (1.2)', 'Спец 3.1.1', 'Склад', ''],
  ['312', 'Склад 312', 'ФОП Орг (1.1)', 'Спец 3.1.2', 'Склад', ''],
  ['0000', 'Ашан', 'Вторинна допо...', 'Спеціаліст Аку...', 'Склад', ''],
  ['5461', 'ВТВ', 'Вторинна допо...', 'Спеціаліст Аку...', 'Склад', ''],
  ['0005', 'Склад (Сергій)', 'Вторинна допо...', 'Спеціаліст нар...', 'Склад', 'ВТВ'],
  ['rhh', 'склад', 'Вторинка нова...', 'Головний Мед...', 'Склад-пункт ви...', ''],
  ['001234', 'Тестове МісцеАТ', 'Вторинка нова...', 'Головний Мед...', 'Пункт Щеплення', ''],
  ['02-01', 'Склат АТ', 'Вторинка нова...', 'Головний Мед...', 'Пункт Щеплення', ''],
  ['02-01-03', 'Склат АТФ', 'Вторинка нова...', 'Головний Мед...', 'Пункт Щеплення', ''],
  ['010010', 'Тест АТ-1', 'Вторинка нова...', 'Лікар Мед Пікар', 'Пункт Щеплення', ''],
  ['020103', 'Новий ТестСкл...', 'Вторинка нова...', 'Лікар Айболіт', 'Пункт Щеплення', ''],
  ['00НеБолить', 'Склад НеБолить', 'Вторинка нова...', 'Лікар НеБолить', 'Пункт Щеплення', '']
];

// ---------- app ----------

const App = () => {
  const [selectedNode, setSelectedNode] = useState('stores');
  const [selectedRow, setSelectedRow] = useState(0);

  return (
    <Window>
      <GlobalStyle />
      <TitleBar>
        <TitleSide />
        <TitleText>
          Склади
          <Frame $inset="-5px 0 -5px" />
        </TitleText>
        <TitleSide>
          <WindowControls>
            <button aria-label="Згорнути">
              <svg width="12" height="12" viewBox="0 0 12 12"><path d="M1 9h10" stroke="#7f95b8" strokeWidth="2.500" /></svg>
            </button>
            <button aria-label="Розгорнути">
              <svg width="12" height="12" viewBox="0 0 12 12">
                <rect x="0.500" y="1" width="11" height="9.500" fill="none" stroke="#8c9fbd" />
                <path d="M0 2.500h12" stroke="#748bb0" strokeWidth="3" />
              </svg>
            </button>
            <button aria-label="Закрити вікно">
              <svg width="12" height="12" viewBox="0 0 12 12"><path d="M1 1l10 10M11 1L1 11" stroke="#7f95b8" strokeWidth="2" /></svg>
            </button>
          </WindowControls>
        </TitleSide>
      </TitleBar>
      <Orb aria-label="Меню">
        <OrbIcon />
      </Orb>

      <TabStrip>
        <Tab>Головна</Tab>
      </TabStrip>
      <Ribbon>
        <Group $width="414px" $marked>
          <GroupBody>
            {ribbonButtons.map(({ label, Icon, marked }) => (
              <RibbonButton key={label}>
                <Icon />
                {label}
                {marked && <Frame $inset="-2px -6px -2px -5px" />}
                {marked && (
                  <PointerArrow width="40" height="40" viewBox="0 0 40 40">
                    <path d="M36 34L14 13" stroke="#ff0000" strokeWidth="3.500" strokeLinecap="round" />
                    <path d="M2 2l18 9-9 8z" fill="#ff0000" />
                  </PointerArrow>
                )}
              </RibbonButton>
            ))}
          </GroupBody>
          <GroupTitle>Довідник</GroupTitle>
        </Group>
        <Group $width="257px">
          <GroupList>
            <SmallButton><ToolsSmallIcon />Налагодження колонок</SmallButton>
            <SmallButton><ResetIcon />Скинути налагодження колонок</SmallButton>
          </GroupList>
          <GroupTitle>Налагодження</GroupTitle>
        </Group>
        <Group $width="103px">
          <GroupBody $align="center">
            <RibbonButton disabled>
              <UndoIcon />
              Відновити
            </RibbonButton>
          </GroupBody>
          <GroupTitle>Спеціальні дії</GroupTitle>
        </Group>
      </Ribbon>

      <Workspace>
        <Sidebar>
          <NavHeader>
            <SquaresIcon />
            <NavTitle>Складський облік (ТМЦ)</NavTitle>
            <button aria-label="Згорнути панель">
              <svg width="16" height="16" viewBox="0 0 16 16">
                <path d="M8 2L3 8l5 6M13 2L8 8l5 6" fill="none" stroke="#5f86c0" strokeWidth="1.700" />
              </svg>
            </button>
          </NavHeader>
          <Tree>
            {treeItems.map(({ id, label, level, arrow, Icon, marked }) => (
              <TreeRow key={id} $level={level}>
                <Expander>{arrow && <Triangle dir={arrow} />}</Expander>
                <TreeItem $selected={id === selectedNode} onClick={() => setSelectedNode(id)}>
                  <Icon />
                  {label}
                  {marked && <Frame $inset="-2px -2px -2px -5px" />}
                </TreeItem>
              </TreeRow>
            ))}
          </Tree>
          <Splitter><Dots /></Splitter>
          <IconBar>
            {modules.map(({ name, Icon, active }) => (
              <IconButton key={name} aria-label={name} $active={active}>
                <Icon />
              </IconButton>
            ))}
            <MoreButton aria-label="Ще">
              <svg width="8" height="5" viewBox="0 0 8 5"><path d="M0.500 0.500h7l-3.500 4z" fill="#4f7cc0" /></svg>
            </MoreButton>
          </IconBar>

          <Banner>
            <BannerTop>
              <QrCode seed={7} />
              <SignLogo />
              <QrCode seed={421} />
            </BannerTop>
            <BannerText>Кваліфіковані<br />електронні підписи</BannerText>
          </Banner>

          <Splitter><Dots /></Splitter>
          <CardsHeader>Відкриті картки</CardsHeader>
          <Cards>
            <Card>
              <DocIcon />
              <CardText>
                <CardName>Склади</CardName>
                <CardPath>Складський облік (ТМЦ)/Номенклатура</CardPath>
              </CardText>
              <button aria-label="Закрити картку">
                <RoundCloseIcon />
              </button>
            </Card>
          </Cards>
        </Sidebar>

        <GridPanel>
          <TableBox>
            <Table>
              <thead>
                <tr>
                  <HeadCell $marker />
                  {columns.map(name => (
                    <HeadCell key={name}>
                      <HeadLabel>{name}</HeadLabel>
                    </HeadCell>
                  ))}
                </tr>
              </thead>
              <tbody>
                {rows.map((row, i) => (
                  <Row key={row[0]} $selected={i === selectedRow} onClick={() => setSelectedRow(i)}>
                    <MarkerCell>{i === selectedRow && <Triangle dir="right" color="#8aabdc" />}</MarkerCell>
                    {row.map((value, j) => (
                      <Cell key={j}>{value}</Cell>
                    ))}
                  </Row>
                ))}
              </tbody>
            </Table>
          </TableBox>
          <ScrollBar>
            <ScrollHead />
            <ScrollButton aria-label="Вгору"><Triangle dir="up" color="#44557f" /></ScrollButton>
            <ScrollTrack>
              <ScrollThumb>
                <svg width="11" height="9" viewBox="0 0 11 9">
                  <path d="M0 1h11M0 3.500h11M0 6h11M0 8.500h11" stroke="#5d6b8c" strokeWidth="1" />
                </svg>
              </ScrollThumb>
            </ScrollTrack>
            <ScrollButton aria-label="Вниз"><Triangle dir="down" color="#44557f" /></ScrollButton>
          </ScrollBar>
        </GridPanel>
      </Workspace>
    </Window>
  );
};

export default App;
